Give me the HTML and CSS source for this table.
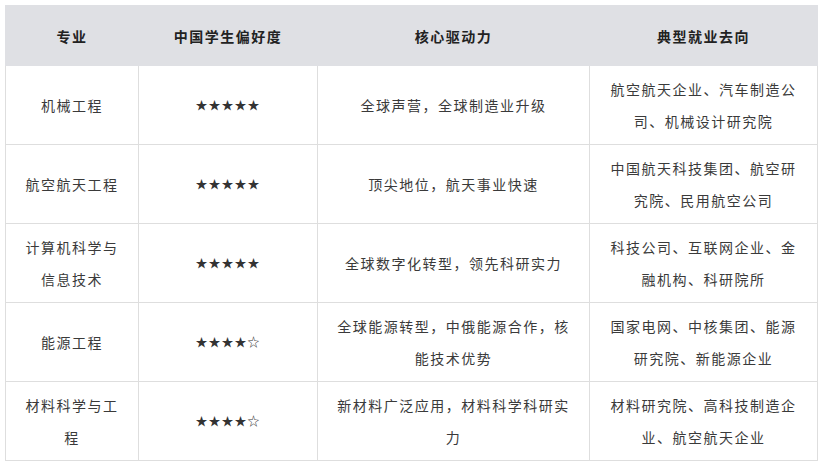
FILE: index.html
```html
<!DOCTYPE html>
<html lang="zh-CN">
<head>
<meta charset="utf-8">
<title>专业偏好</title>
<link rel="stylesheet" href="styles.css">
</head>
<body>
<table class="majors">
  <colgroup>
    <col class="c1"><col class="c2"><col class="c3"><col class="c4">
  </colgroup>
  <thead>
    <tr><th>专业</th><th>中国学生偏好度</th><th>核心驱动力</th><th>典型就业去向</th></tr>
  </thead>
  <tbody>
    <tr><td>机械工程</td><td class="stars">★★★★★</td><td>全球声营，全球制造业升级</td><td>航空航天企业、汽车制造公司、机械设计研究院</td></tr>
    <tr><td>航空航天工程</td><td class="stars">★★★★★</td><td>顶尖地位，航天事业快速</td><td>中国航天科技集团、航空研究院、民用航空公司</td></tr>
    <tr><td>计算机科学与信息技术</td><td class="stars">★★★★★</td><td>全球数字化转型，领先科研实力</td><td>科技公司、互联网企业、金融机构、科研院所</td></tr>
    <tr><td>能源工程</td><td class="stars">★★★★☆</td><td>全球能源转型，中俄能源合作，核能技术优势</td><td>国家电网、中核集团、能源研究院、新能源企业</td></tr>
    <tr><td>材料科学与工程</td><td class="stars">★★★★☆</td><td>新材料广泛应用，材料科学科研实力</td><td>材料研究院、高科技制造企业、航空航天企业</td></tr>
  </tbody>
</table>
</body>
</html>
```
FILE: styles.css
```css
html, body {
  margin: 0;
  padding: 0;
  background: #ffffff;
}
body {
  padding: 5px;
  font-family: "Noto Sans CJK SC", "Noto Sans", sans-serif;
  color: #3a3a3a;
}
.majors {
  width: 812px;
  border-collapse: collapse;
  table-layout: fixed;
  font-size: 14px;
  letter-spacing: 1.5px;
}
.c1 { width: 133px; }
.c2 { width: 179px; }
.c3 { width: 272px; }
.c4 { width: 228px; }
.majors th {
  background: #dfe0e4;
  color: #222222;
  font-weight: bold;
  height: 60px;
  padding: 0 12px;
  line-height: 32px;
  text-align: center;
  border: 1px solid #dfe0e4;
  box-sizing: border-box;
}
.majors td {
  border: 1px solid #dedede;
  padding: 7px 18px;
  line-height: 32px;
  height: 79px;
  box-sizing: border-box;
  text-align: center;
  vertical-align: middle;
}
.majors td.stars {
  font-size: 12px;
  letter-spacing: 1px;
  color: #333333;
}
```
